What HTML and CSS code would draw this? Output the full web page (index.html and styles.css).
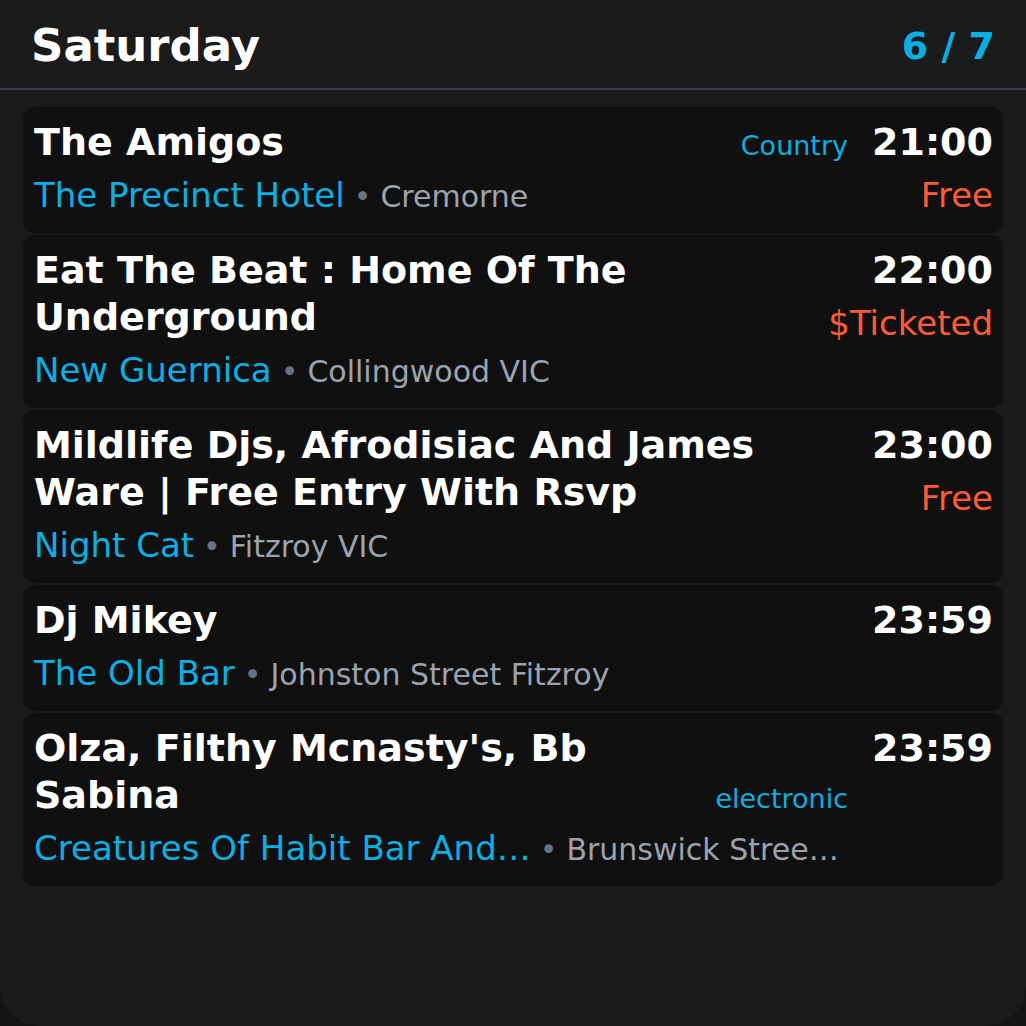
FILE: index.html
```html
<!DOCTYPE html>
<html lang="en">
<head>
<meta charset="utf-8">
<title>Saturday</title>
<link rel="stylesheet" href="styles.css">
</head>
<body>
<div class="screen">
  <header class="header">
    <h1 class="day">Saturday</h1>
    <div class="count">6 / 7</div>
  </header>
  <main class="list">
    <article class="card">
      <div class="main">
        <div class="title-row">
          <div class="title">The Amigos</div>
          <div class="tag">Country</div>
        </div>
        <div class="place"><span class="venue">The Precinct Hotel</span><span class="sep">•</span><span class="loc">Cremorne</span></div>
      </div>
      <div class="side">
        <div class="time">21:00</div>
        <div class="price">Free</div>
      </div>
    </article>
    <article class="card">
      <div class="main">
        <div class="title-row">
          <div class="title">Eat The Beat : Home Of The Underground</div>
        </div>
        <div class="place"><span class="venue">New Guernica</span><span class="sep">•</span><span class="loc">Collingwood VIC</span></div>
      </div>
      <div class="side">
        <div class="time">22:00</div>
        <div class="price">$Ticketed</div>
      </div>
    </article>
    <article class="card">
      <div class="main">
        <div class="title-row">
          <div class="title">Mildlife Djs, Afrodisiac And James Ware | Free Entry With Rsvp</div>
        </div>
        <div class="place"><span class="venue">Night Cat</span><span class="sep">•</span><span class="loc">Fitzroy VIC</span></div>
      </div>
      <div class="side">
        <div class="time">23:00</div>
        <div class="price">Free</div>
      </div>
    </article>
    <article class="card">
      <div class="main">
        <div class="title-row">
          <div class="title">Dj Mikey</div>
        </div>
        <div class="place"><span class="venue">The Old Bar</span><span class="sep">•</span><span class="loc">Johnston Street Fitzroy</span></div>
      </div>
      <div class="side">
        <div class="time">23:59</div>
      </div>
    </article>
    <article class="card">
      <div class="main">
        <div class="title-row">
          <div class="title">Olza, Filthy Mcnasty's, Bb Sabina</div>
          <div class="tag">electronic</div>
        </div>
        <div class="place"><span class="venue">Creatures Of Habit Bar And…</span><span class="sep">•</span><span class="loc">Brunswick Stree…</span></div>
      </div>
      <div class="side">
        <div class="time">23:59</div>
      </div>
    </article>
  </main>
</div>
</body>
</html>
```
FILE: styles.css
```css
html, body {
  margin: 0;
  padding: 0;
  background: #141414;
}

body {
  font-family: "DejaVu Sans", "Liberation Sans", sans-serif;
  color: #ffffff;
}

.screen {
  width: 1026px;
  height: 1026px;
  background: #1b1b1b;
  border-radius: 0 0 40px 40px;
  overflow: hidden;
  box-sizing: border-box;
}

.header {
  display: flex;
  align-items: center;
  justify-content: space-between;
  padding: 19px 31px 15px 31px;
  border-bottom: 2px solid #393e4a;
}

.day {
  margin: 0;
  font-size: 45px;
  font-weight: bold;
  line-height: 54px;
  color: #ffffff;
}

.count {
  font-size: 38px;
  font-weight: bold;
  color: #0aafe4;
}

.list {
  display: flex;
  flex-direction: column;
  gap: 2px;
  padding: 17px 23px;
}

.card {
  display: flex;
  gap: 24px;
  background: #101010;
  border-radius: 12px;
  padding: 12px 10px 12px 11px;
}

.main {
  flex: 1;
  min-width: 0;
}

.title-row {
  display: flex;
  align-items: last baseline;
  gap: 12px;
}

.title {
  flex: 1;
  min-width: 0;
  font-size: 38px;
  font-weight: bold;
  line-height: 47px;
  color: #ffffff;
}

.tag {
  font-size: 27px;
  line-height: 32px;
  color: #0aafe4;
  white-space: nowrap;
}

.place {
  margin-top: 4px;
  font-size: 34px;
  line-height: 51px;
  white-space: nowrap;
  overflow: hidden;
  text-overflow: ellipsis;
}

.venue {
  color: #0aafe4;
}

.sep {
  font-size: 30px;
  line-height: 40px;
  color: #6b7280;
  margin: 0 9px;
}

.loc {
  font-size: 30px;
  line-height: 40px;
  color: #9ca3af;
}

.side {
  text-align: right;
  white-space: nowrap;
}

.time {
  font-size: 38px;
  font-weight: bold;
  line-height: 47px;
  color: #ffffff;
}

.price {
  margin-top: 4px;
  font-size: 34px;
  line-height: 50px;
  color: #ff5b37;
}
```
